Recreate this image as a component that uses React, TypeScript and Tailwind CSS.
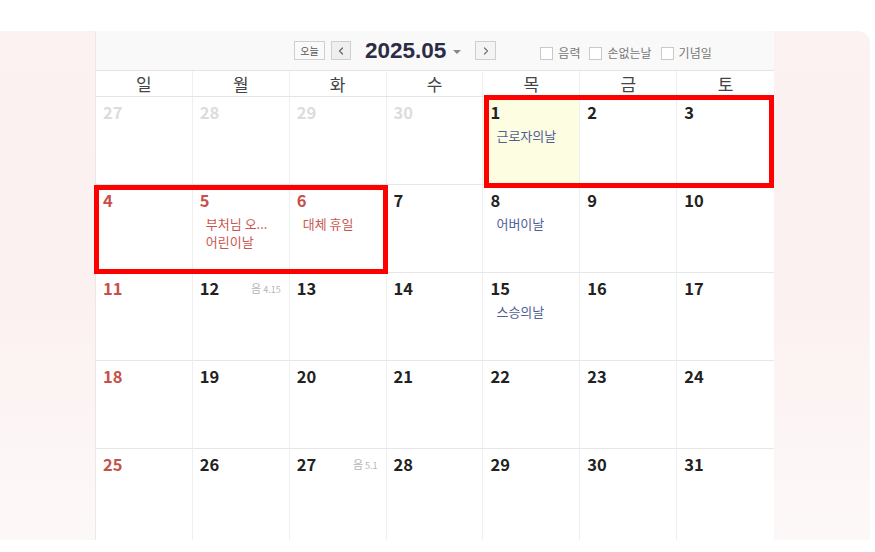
import { ChevronLeft, ChevronRight } from "lucide-react";

type Day = {
  n: number;
  muted?: boolean;
  red?: boolean;
  today?: boolean;
  labels?: string[];
  labelRed?: boolean;
  lunar?: string;
};

const weekNames = ["일", "월", "화", "수", "목", "금", "토"];

const weeks: Day[][] = [
  [
    { n: 27, muted: true },
    { n: 28, muted: true },
    { n: 29, muted: true },
    { n: 30, muted: true },
    { n: 1, today: true, labels: ["근로자의날"] },
    { n: 2 },
    { n: 3 },
  ],
  [
    { n: 4, red: true },
    { n: 5, red: true, labels: ["부처님 오...", "어린이날"], labelRed: true },
    { n: 6, red: true, labels: ["대체 휴일"], labelRed: true },
    { n: 7 },
    { n: 8, labels: ["어버이날"] },
    { n: 9 },
    { n: 10 },
  ],
  [
    { n: 11, red: true },
    { n: 12, lunar: "4.15" },
    { n: 13 },
    { n: 14 },
    { n: 15, labels: ["스승의날"] },
    { n: 16 },
    { n: 17 },
  ],
  [
    { n: 18, red: true },
    { n: 19 },
    { n: 20 },
    { n: 21 },
    { n: 22 },
    { n: 23 },
    { n: 24 },
  ],
  [
    { n: 25, red: true },
    { n: 26 },
    { n: 27, lunar: "5.1" },
    { n: 28 },
    { n: 29 },
    { n: 30 },
    { n: 31 },
  ],
];

const Check = ({ label }: { label: string }) => (
  <label className="flex items-center gap-[5px] text-[12px] text-[#777]">
    <span className="h-[13px] w-[13px] border border-[#c9c9c9] bg-white" />
    {label}
  </label>
);

const Cell = ({ day, last }: { day: Day; last: boolean }) => {
  const numColor = day.muted
    ? "text-[#dcdcdc]"
    : day.red
    ? "text-[#c8504a]"
    : "text-[#222]";
  return (
    <div
      className={`flex flex-col border-r border-[#efefef] last:border-r-0 ${
        last ? "h-[91px]" : "h-[88px] border-b border-b-[#e6e6e6]"
      } ${day.today ? "bg-[#fdfde2]" : ""}`}
    >
      <div className="flex items-start justify-between pl-[7px] pr-[8px] pt-[4px]">
        <span className={`text-[16.5px] font-bold leading-[22px] ${numColor}`}>
          {day.n}
        </span>
        {day.lunar && (
          <span className="mt-[3px] flex items-baseline gap-[2px] text-[11px] text-[#b5b5b5]">
            음<span className="text-[9px]">{day.lunar}</span>
          </span>
        )}
      </div>
      {day.labels && (
        <div className="mt-[4px] flex flex-col pl-[13px]">
          {day.labels.map((l) => (
            <span
              key={l}
              className={`text-[13px] leading-[18px] ${
                day.labelRed ? "text-[#c9574f]" : "text-[#4f5e97]"
              }`}
            >
              {l}
            </span>
          ))}
        </div>
      )}
    </div>
  );
};

export default function App() {
  return (
    <div className="h-[552px] w-[875px] overflow-hidden bg-white font-['Noto_Sans_CJK_KR',sans-serif]">
      <div className="mt-[31px] flex h-[509px] w-[870px] rounded-tr-[12px] bg-linear-to-b from-[#fcf2f2] via-[#fcf1f1] to-[#fdf8f8] pl-[95px]">
        <div className="relative flex w-[679px] flex-col border-l border-[#e9e9e9] bg-white">
          {/* toolbar */}
          <div className="flex h-[40px] items-center border-b border-[#e4e4e4] bg-[#f9f9f9] pl-[198px]">
            <button className="flex h-[19px] w-[31px] items-center justify-center border border-[#cfcfcf] bg-[#fafafa] text-[10px] text-[#555]">
              오늘
            </button>
            <button className="ml-[6px] flex h-[19px] w-[20px] items-center justify-center border border-[#cfcfcf] bg-[#efefef] text-[#666]">
              <ChevronLeft size={12} strokeWidth={2.5} />
            </button>
            <span className="ml-[14px] font-['Liberation_Sans',sans-serif] text-[22.5px] font-bold text-[#2c2c46]">
              2025.05
            </span>
            <span className="ml-[7px] mt-[2px] h-0 w-0 border-x-[4px] border-t-[4px] border-x-transparent border-t-[#888]" />
            <button className="ml-[14px] flex h-[19px] w-[21px] items-center justify-center border border-[#cfcfcf] bg-[#f4f4f4] text-[#777]">
              <ChevronRight size={12} strokeWidth={2.5} />
            </button>
            <div className="ml-[44px] mt-[5px] flex items-center gap-[9px]">
              <Check label="음력" />
              <Check label="손없는날" />
              <Check label="기념일" />
            </div>
          </div>

          {/* weekday names */}
          <div className="grid h-[26px] grid-cols-7 border-b border-[#e4e4e4]">
            {weekNames.map((w) => (
              <div
                key={w}
                className="flex items-center justify-center border-r border-[#efefef] text-[17px] leading-none text-[#444] last:border-r-0"
              >
                {w}
              </div>
            ))}
          </div>

          {/* weeks */}
          {weeks.map((week, i) => (
            <div key={i} className="grid grid-cols-7">
              {week.map((d, j) => (
                <Cell key={j} day={d} last={i === weeks.length - 1} />
              ))}
            </div>
          ))}

          {/* highlight boxes */}
          <div className="pointer-events-none absolute left-[388px] top-[64px] h-[93px] w-[290px] border-[5px] border-[#ff0000]" />
          <div className="pointer-events-none absolute left-[-2px] top-[154px] h-[89px] w-[294px] border-[5px] border-[#ff0000]" />
        </div>
      </div>
    </div>
  );
}
